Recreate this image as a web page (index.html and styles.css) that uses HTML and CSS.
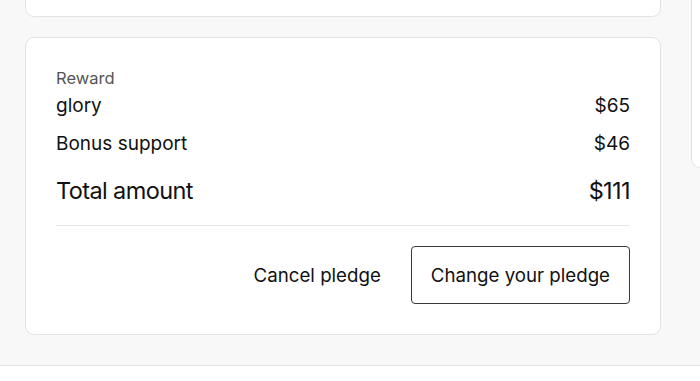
FILE: index.html
```html
<!DOCTYPE html>
<html lang="en">
  <head>
    <meta charset="UTF-8" />
    <meta name="viewport" content="width=device-width, initial-scale=1.0" />
    <title>Manage your pledge</title>
    <link rel="stylesheet" href="styles.css">
  </head>

  <body>
    <div class="page">
      <main class="main_col">
        <section class="card card_top"></section>

        <section class="card summary">
          <div class="reward">
            <p class="label">Reward</p>
            <div class="row">
              <span>glory</span>
              <span>$65</span>
            </div>
          </div>
          <div class="row">
            <span>Bonus support</span>
            <span>$46</span>
          </div>
          <div class="row total">
            <span>Total amount</span>
            <span>$111</span>
          </div>

          <hr />

          <div class="actions">
            <button class="link_btn">Cancel pledge</button>
            <button class="outline_btn">Change your pledge</button>
          </div>
        </section>
      </main>

      <aside class="side_col">
        <div class="card side_card"></div>
      </aside>
    </div>

    <footer></footer>
  </body>
</html>
```

FILE: styles.css
```css
* {
  box-sizing: border-box;
}

body {
  margin: 0;
  font-family: "Inter", "Liberation Sans", sans-serif;
  color: #111;
  background-color: #fff;
}

p {
  margin: 0;
}

.page {
  display: flex;
  gap: 30px;
  padding: 0 0 30px 25px;
  margin-top: -120px;
  background-color: #f8f8f8;
  border-bottom: 1px solid #e3e3e3;
}

.main_col {
  width: 636px;
  flex-shrink: 0;
  display: flex;
  flex-direction: column;
  gap: 20px;
}

.card {
  background-color: #fff;
  border: 1px solid #e3e3e3;
  border-radius: 9px;
}

.card_top {
  height: 137px;
}

.summary {
  padding: 30px 30px 30px 30px;
}

.label {
  font-size: 16.5px;
  line-height: 20px;
  color: #555;
}

.row {
  display: flex;
  justify-content: space-between;
  align-items: baseline;
  font-size: 19px;
  line-height: 24px;
}

.reward .row {
  margin-top: 6px;
}

.summary > .row {
  margin-top: 14px;
}

.summary > .total {
  margin-top: 21px;
  font-size: 23.5px;
  line-height: 28px;
  letter-spacing: -0.6px;
}

hr {
  border: none;
  border-top: 1px solid #e8e8e8;
  margin: 20px 0 20px 0;
}

.actions {
  display: flex;
  justify-content: flex-end;
  align-items: center;
  gap: 30px;
}

button {
  font-family: "Inter", "Liberation Sans", sans-serif;
  font-size: 18.7px;
  color: #111;
  background-color: #fff;
  cursor: pointer;
}

.link_btn {
  border: none;
  padding: 0;
}

.outline_btn {
  height: 58px;
  padding: 0 19px;
  border: 1px solid #3a3a3a;
  border-radius: 4px;
}

.side_col {
  flex-grow: 1;
}

.side_card {
  height: 288px;
  border-top-right-radius: 0;
  border-bottom-right-radius: 0;
  border-right: none;
}

footer {
  height: 40px;
}
```
